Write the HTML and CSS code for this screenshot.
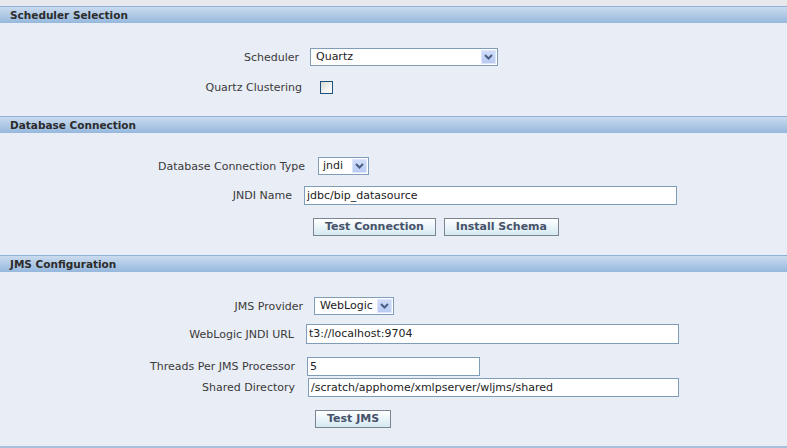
FILE: index.html
```html
<!DOCTYPE html>
<html>
<head>
<meta charset="utf-8">
<title>Scheduler Configuration</title>
<link rel="stylesheet" href="styles.css">
</head>
<body>
<div class="top"></div>

<section class="sec s1">
  <h2 class="hdr">Scheduler Selection</h2>
  <div class="body">
    <div class="row r-sched">
      <span class="lbl">Scheduler</span>
      <div class="select"><span class="val">Quartz</span><span class="arrow"><svg width="9" height="6" viewBox="0 0 9 6"><path d="M1 1 L4.5 4.5 L8 1" fill="none" stroke="#4a5f86" stroke-width="2"/></svg></span></div>
    </div>
    <div class="row r-cluster">
      <span class="lbl">Quartz Clustering</span>
      <span class="check"></span>
    </div>
  </div>
</section>

<section class="sec s2">
  <h2 class="hdr">Database Connection</h2>
  <div class="body">
    <div class="row r-dbtype">
      <span class="lbl">Database Connection Type</span>
      <div class="select"><span class="val">jndi</span><span class="arrow"><svg width="9" height="6" viewBox="0 0 9 6"><path d="M1 1 L4.5 4.5 L8 1" fill="none" stroke="#4a5f86" stroke-width="2"/></svg></span></div>
    </div>
    <div class="row r-jndi">
      <span class="lbl">JNDI Name</span>
      <div class="input">jdbc/bip_datasource</div>
    </div>
    <div class="row r-dbbtns">
      <button class="btn">Test Connection</button>
      <button class="btn">Install Schema</button>
    </div>
  </div>
</section>

<section class="sec s3">
  <h2 class="hdr">JMS Configuration</h2>
  <div class="body">
    <div class="row r-provider">
      <span class="lbl">JMS Provider</span>
      <div class="select"><span class="val">WebLogic</span><span class="arrow"><svg width="9" height="6" viewBox="0 0 9 6"><path d="M1 1 L4.5 4.5 L8 1" fill="none" stroke="#4a5f86" stroke-width="2"/></svg></span></div>
    </div>
    <div class="row r-url">
      <span class="lbl">WebLogic JNDI URL</span>
      <div class="input">t3://localhost:9704</div>
    </div>
    <div class="row r-threads">
      <span class="lbl">Threads Per JMS Processor</span>
      <div class="input">5</div>
    </div>
    <div class="row r-shared">
      <span class="lbl">Shared Directory</span>
      <div class="input">/scratch/apphome/xmlpserver/wljms/shared</div>
    </div>
    <div class="row r-jmsbtn">
      <button class="btn">Test JMS</button>
    </div>
  </div>
</section>
</body>
</html>
```

FILE: styles.css
```css
* { box-sizing: border-box; }

html, body {
  margin: 0;
  padding: 0;
}

body {
  background: #e9edf5;
  font-family: "DejaVu Sans", Verdana, sans-serif;
  font-size: 11px;
  color: #3a3a3a;
  width: 787px;
  height: 448px;
  overflow: hidden;
}

.top {
  height: 6px;
  background: #e7e9ec;
}

.hdr {
  margin: 0;
  height: 17px;
  border-top: 1px solid #8fb0d7;
  background: linear-gradient(#cadbee, #96b8dd);
  font-size: 10.5px;
  font-weight: bold;
  line-height: 16px;
  padding-left: 10px;
  color: #2c2c2c;
}

.row {
  display: flex;
  align-items: center;
}

.lbl {
  flex: none;
  text-align: right;
  white-space: nowrap;
}

/* controls */
.select {
  flex: none;
  display: flex;
  align-items: center;
  justify-content: space-between;
  height: 18px;
  background: #fff;
  border: 1px solid #7f9db9;
  padding: 0 1px 0 5px;
  color: #222;
}

.val {
  line-height: 16px;
}

.arrow {
  width: 15px;
  height: 14px;
  background: linear-gradient(#d0dcfa, #b9cbf3);
  border: 1px solid #dde6fb;
  display: flex;
  align-items: center;
  justify-content: center;
}

.input {
  flex: none;
  height: 19px;
  background: #fff;
  border: 1px solid #7f9db9;
  padding: 0 2px;
  line-height: 17px;
  color: #222;
  white-space: nowrap;
}

.check {
  flex: none;
  width: 13px;
  height: 13px;
  border: 1px solid #1c5180;
  background: linear-gradient(135deg, #dcdcd5, #f6f6f4 70%, #fff);
}

.btn {
  height: 18px;
  padding: 0 11px;
  border: 1px solid #7b8491;
  background: linear-gradient(#ffffff, #d4e9f1);
  font-family: "DejaVu Sans", Verdana, sans-serif;
  font-size: 11px;
  font-weight: bold;
  color: #46526a;
  line-height: 16px;
  margin: 0;
}

/* section 1 */
.s1 .body { padding: 25px 0 22px; }
.r-sched { height: 18px; }
.r-sched .lbl { width: 299px; }
.r-sched .select { margin-left: 11px; width: 188px; }
.r-cluster { height: 13px; margin-top: 15px; }
.r-cluster .lbl { width: 302px; }
.r-cluster .check { margin-left: 18px; }

/* section 2 */
.s2 .body { padding: 24px 0 19px; }
.r-dbtype { height: 18px; }
.r-dbtype .lbl { width: 305px; }
.r-dbtype .select { margin-left: 13px; width: 51px; padding-left: 4px; }
.r-jndi { height: 19px; margin-top: 11px; }
.r-jndi .lbl { width: 292px; }
.r-jndi .input { margin-left: 12px; width: 373px; }
.r-dbbtns { height: 18px; margin-top: 13px; padding-left: 313px; gap: 8px; }

/* section 3 */
.s3 .body {
  padding: 25px 0 18px;
  border-bottom: 2px solid #a7c0dc;
}
.r-provider { height: 18px; }
.r-provider .lbl { width: 303px; }
.r-provider .select { margin-left: 11px; width: 80px; }
.r-url { height: 20px; margin-top: 9px; }
.r-url .input { height: 20px; line-height: 18px; }
.r-url .lbl { width: 294px; }
.r-url .input { margin-left: 12px; width: 373px; }
.r-threads { height: 19px; margin-top: 13px; }
.r-threads .lbl { width: 295px; }
.r-threads .input { margin-left: 12px; width: 173px; }
.r-shared { height: 19px; margin-top: 2px; }
.r-shared .lbl { width: 295px; }
.r-shared .input { margin-left: 13px; width: 371px; }
.r-jmsbtn { height: 18px; margin-top: 13px; padding-left: 315px; }
```
